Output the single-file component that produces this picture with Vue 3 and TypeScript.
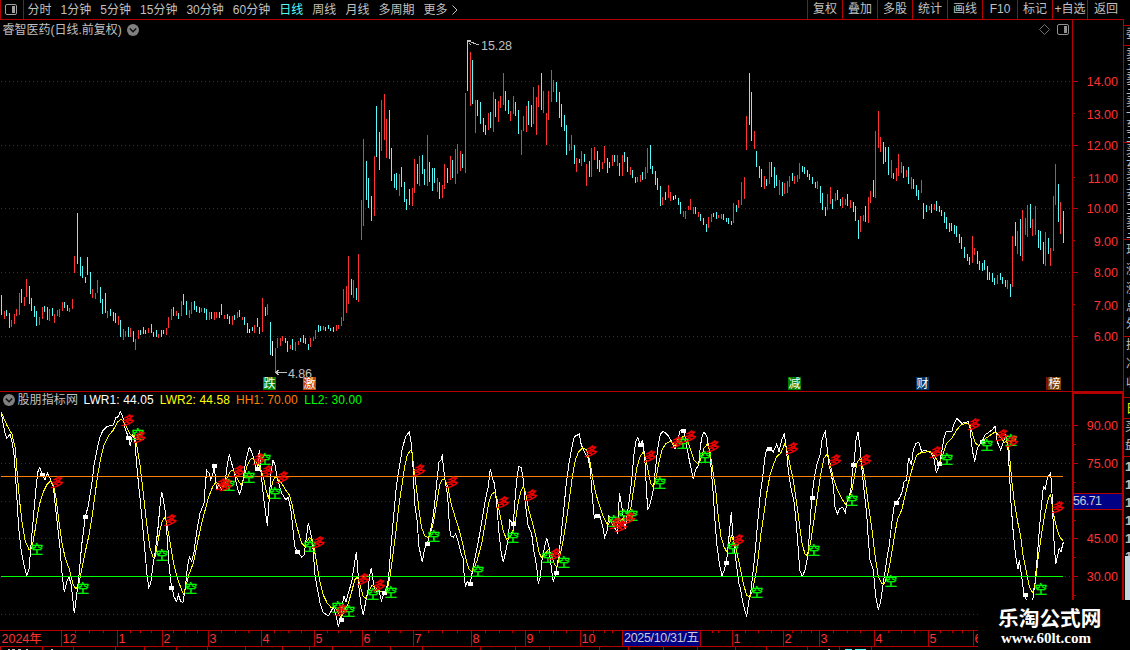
<script setup lang="ts">
import { computed, ref } from 'vue'

type Point = [number, number]

interface Bar {
  x: number
  top: number
  bottom: number
  kind: string
}

const periods = ['分时', '1分钟', '5分钟', '15分钟', '30分钟', '60分钟', '日线', '周线', '月线', '多周期', '更多']
const actions = ['复权', '叠加', '多股', '统计', '画线', 'F10', '标记', '+自选', '返回']
const activePeriod = ref('日线')

// x, high, low, kind: r = up, c = down, w = flat
const barData = `1 295 315 c,4 311 319 r,6 310 316 c,9 313 328 c,11 320 327 r,14 314 324 r,16 309 316 r,19 293 315 r,21 289 303 c,24 297 306 r,26 279 297 r,29 286 304 c,31 298 311 c,34 306 317 c,36 311 326 c,39 317 325 r,42 307 319 r,44 306 312 c,47 307 320 c,49 309 321 r,52 308 316 c,54 314 323 r,57 310 316 r,59 309 317 r,62 302 311 r,64 302 308 c,67 305 311 c,69 308 312 r,72 299 309 r,74 256 273 r,77 213 264 c,80 257 276 c,82 266 278 c,85 277 283 c,87 257 275 c,90 272 294 c,92 289 298 r,95 293 299 r,97 280 293 r,100 287 303 c,102 299 314 c,105 293 313 c,107 311 318 r,110 309 316 c,113 312 321 c,115 313 323 c,118 316 325 r,120 320 337 c,
123 329 340 r,125 331 337 r,128 327 337 c,130 328 337 r,133 331 342 c,135 339 350 r,138 330 339 r,140 330 335 c,143 327 334 c,145 330 334 c,148 328 333 r,151 324 333 c,153 332 337 c,156 330 337 c,158 334 338 r,161 330 337 c,163 330 334 c,166 328 335 r,168 317 328 r,171 309 320 r,173 307 316 c,176 311 316 r,178 313 319 c,181 301 316 r,183 294 305 c,186 301 315 c,189 310 318 r,191 302 314 r,194 301 310 c,196 306 312 c,199 307 313 c,201 308 312 r,204 308 313 c,206 309 320 c,209 312 320 r,211 312 319 c,214 312 320 r,216 312 318 r,219 312 318 c,221 304 315 c,224 315 319 r,227 314 319 c,229 316 324 c,232 316 325 r,234 315 320 c,237 312 318 r,239 310 317 c,242 317 320 r,244 317 325 c,247 323 333 c,249 329 333 w,252 327 331 c,254 325 333 r,257 318 327 c,259 327 334 c,262 298 332 r,265 307 316 c,267 304 315 r,270 322 355 c,272 341 356 w,275 348 372 r,277 338 348 r,280 338 346 r,282 336 341 r,285 338 343 c,287 341 352 c,290 345 349 r,292 339 350 c,295 342 351 r,298 341 345 r,300 338 342 c,303 335 343 c,305 338 344 c,308 344 350 c,310 338 347 r,313 337 341 r,315 330 339 r,318 325 332 c,320 326 331 c,323 326 330 r,325 327 331 c,328 325 329 c,330 328 331 c,333 327 332 c,336 325 331 r,338 325 329 r,341 317 326 r,343 289 321 r,346 286 313 r,348 256 304 r,351 279 295 c,353 280 298 r,356 288 300 c,358 254 302 r,
361 200 240 r,363 139 226 r,366 161 200 c,368 178 208 c,371 196 221 c,374 156 216 r,376 106 157 c,379 132 170 c,381 100 151 r,384 94 140 r,386 119 158 r,389 110 159 c,391 148 181 c,394 174 188 c,396 173 190 c,399 174 196 r,401 167 187 c,404 182 202 c,406 199 210 c,409 189 205 c,412 188 206 r,414 159 193 r,417 164 184 c,419 156 186 r,422 155 174 c,424 169 185 c,427 135 186 r,429 162 182 c,432 168 191 c,434 168 183 c,437 178 192 r,439 182 199 c,442 185 198 r,444 164 189 r,447 168 183 c,450 156 180 r,452 160 178 c,455 149 184 r,457 144 174 r,460 151 171 r,462 154 168 c,465 93 173 r,467 40 91 c,470 52 106 r,472 60 104 c,475 100 133 r,477 100 116 c,480 102 124 c,483 118 132 c,485 125 135 c,488 113 130 r,490 112 128 c,493 92 132 r,495 99 117 c,498 101 122 r,500 96 108 r,503 73 105 r,505 91 111 c,508 100 114 c,510 111 121 r,513 96 114 r,515 102 116 c,518 110 134 c,521 130 155 r,523 116 131 r,526 106 132 r,528 101 125 c,531 105 127 c,533 87 124 r,536 97 135 r,538 85 107 r,541 73 110 c,543 91 113 r,546 113 145 r,548 91 120 r,551 70 102 r,553 80 92 r,556 82 102 c,559 92 118 c,561 104 127 c,564 115 131 c,566 125 155 c,569 144 151 r,571 135 150 r,574 145 164 c,576 158 172 r,579 159 163 c,581 151 166 r,584 154 162 c,586 164 186 r,589 161 177 c,591 148 177 r,594 147 160 r,597 151 169 c,599 160 172 c,602 162 169 r,604 146 163 r,607 158 173 c,609 162 168 c,612 155 166 r,614 155 162 c,617 155 166 r,619 163 176 c,622 155 176 r,624 152 162 c,627 157 172 c,630 167 175 r,632 170 178 c,635 177 183 c,637 177 182 r,640 175 182 r,642 172 180 c,645 167 179 r,647 148 173 r,650 145 169 c,652 166 174 c,655 171 185 c,657 178 190 c,660 186 206 c,662 197 205 r,665 192 200 c,668 185 198 r,670 192 201 r,673 196 200 w,675 195 199 c,678 198 205 c,680 202 214 c,683 211 217 r,685 211 219 r,688 206 210 r,690 199 210 r,693 207 214 r,695 207 214 c,698 212 217 r,
700 214 221 c,703 218 225 c,706 224 232 c,708 217 228 r,711 214 222 r,713 213 217 c,716 212 219 c,718 215 218 r,721 214 219 r,723 214 220 c,726 218 222 c,728 218 224 c,731 221 225 c,733 203 223 r,736 205 212 c,738 200 208 r,741 182 205 r,744 177 199 r,746 116 150 r,749 73 125 c,751 92 141 c,754 131 149 r,756 151 167 c,759 166 178 c,761 169 187 c,764 176 189 r,766 179 186 c,769 162 184 r,771 162 177 c,774 167 188 c,776 175 186 c,779 180 195 r,782 182 196 c,784 183 194 r,787 181 193 r,789 176 187 r,792 173 181 c,794 176 184 r,797 175 182 r,799 163 179 r,802 166 172 c,804 167 174 c,807 170 177 c,809 174 180 c,812 177 184 c,815 182 188 c,817 181 189 r,820 186 203 c,822 193 210 c,825 207 216 c,827 194 210 r,830 187 204 r,832 199 209 c,835 193 201 r,837 190 200 c,840 199 206 c,842 197 208 r,845 199 205 r,847 194 206 c,850 200 208 r,853 202 212 c,855 206 221 c,858 220 239 c,860 216 232 r,863 215 221 r,865 206 222 c,868 197 223 r,870 191 203 r,873 180 197 c,875 131 198 r,878 111 148 r,880 137 152 r,883 142 164 c,885 147 162 c,888 147 175 c,891 160 178 r,893 173 179 c,896 168 181 r,898 154 176 r,901 162 173 r,903 166 178 c,906 170 177 r,908 167 184 c,911 177 189 r,913 179 189 c,916 185 196 c,918 190 200 c,921 180 193 r,923 203 219 c,926 205 212 c,929 206 210 r,931 204 213 c,934 204 210 r,936 201 211 c,939 206 212 c,941 210 216 c,944 212 223 c,946 217 229 c,949 223 232 c,951 223 231 c,954 225 234 c,956 226 237 c,959 234 243 c,961 237 249 c,964 247 258 c,967 254 261 c,969 257 265 c,972 236 263 r,974 248 255 r,977 251 264 c,979 261 270 c,982 263 271 c,984 260 270 c,987 266 280 c,989 272 280 c,992 273 282 c,994 278 285 c,997 275 284 r,1000 273 280 c,1002 277 284 c,1005 280 287 c,1007 280 289 r,1010 284 297 c,1012 236 287 r,1015 222 246 c,1017 231 254 r,1020 219 256 c,1022 210 261 r,1025 218 235 r,1027 205 237 r,1030 204 228 c,1032 219 236 r,1035 206 235 r,1038 230 248 c,1040 231 250 c,1043 242 264 c,1045 232 266 r,1048 238 254 c,1050 248 266 r,1053 196 251 r,1055 164 205 r,1058 184 222 c,1060 202 234 r,1063 211 243 c`

const bars: Bar[] = barData.split(',').map((entry) => {
  const [x, top, bottom, kind] = entry.trim().split(' ')
  return { x: Number(x), top: Number(top), bottom: Number(bottom), kind }
})

function barPath(kind: string) {
  return bars
    .filter(bar => bar.kind === kind)
    .map(bar => `M${bar.x} ${bar.top}h1V${bar.bottom}h-1Z`)
    .join('')
}

// Samples are kept in thirds of a pixel, relative to the chunk origin
function chunk(ox: number, oy: number, data: string): Point[] {
  return data.trim().split(/\s+/).map((pair) => {
    const [x, y] = pair.split(',').map(Number)
    return [ox + x / 3, oy + y / 3]
  })
}

const lwr1: Point[] = [
  ...chunk(0, 385, `4,85 14,140 20,160 30,148 36,170 43,215 49,310 56,430 64,500 72,540 80,572 87,552 93,480 100,400 108,310 113,262 119,248 125,262 135,285 142,264 150,280 160,305 170,400 180,490 187,575 193,622 200,590 207,576 214,600 223,685 230,630 237,570 245,480 256,396 265,362 275,300 282,240 292,190 300,155 310,135 322,124 340,120 347,98 355,95 361,80 368,95 375,130 385,155 391,183 397,150 404,160 409,225 415,290 420,340 427,410 435,500 441,570 446,607 452,595 459,540 467,490 475,420 479,370 485,320 491,350 497,390 503,480 508,550 514,600 522,635 530,650 535,628 542,650 549,652 556,610 562,550 568,516 575,528 582,500 590,440 600,385 612,355 616,300 620,256 627,265 632,285 637,275 643,245 647,290 650,316 656,298 664,312 675,295 682,240 688,208 695,235 702,260 710,300 718,328 725,310 731,270 738,225 748,187 755,200 761,220 768,250 773,245 778,196 783,260 790,330 802,422 808,340 813,260 819,225 825,240 833,285 845,325 858,345 864,336 872,370 878,425 884,485 893,500 905,517 912,510 919,460 925,415 932,445 938,480 945,570 952,610 961,658 970,683 985,692 992,682 1000,665 1008,690 1015,725 1022,700 1031,632 1038,650 1045,625 1055,590 1062,545 1069,500 1073,550 1077,610 1083,660 1090,690 1097,650 1105,610 1109,570`),
  ...chunk(370, 400, `4,503 10,545 16,572 28,575 34,602 42,580 50,565 56,530 62,450 70,360 78,270 84,225 90,190 97,145 107,110 118,95 124,130 129,200 134,310 141,360 147,440 157,487 164,445 172,430 180,400 188,360 194,310 201,240 207,185 213,180 217,163 220,200 226,245 233,290 239,390 243,408 250,412 257,402 265,425 273,460 279,475 283,530 286,558 292,545 300,552 308,510 316,470 325,425 335,365 347,295 355,260 361,206 367,235 373,250 380,310 387,400 394,460 400,487 406,460 415,415 419,360 424,365 430,372 435,300 440,240 446,200 454,202 460,240 466,310 474,375 485,402 491,450 500,500 505,552 511,530 516,480 524,440 530,415 537,440 542,490 550,545 559,515 567,460 574,400 581,330 589,250 597,190 606,140 613,110 628,102 634,135 645,160 655,175 661,210 667,290 673,355 682,348 691,350 698,380 704,412 712,390 716,345 724,370 732,380 742,397 746,340 748,278 754,310 760,350 766,388 772,340 778,300 785,240 791,170 797,125 803,113 810,132 818,122 824,170 829,260 833,330 841,310 850,270 857,200 864,140 871,103 880,94 893,105 905,125 915,148 922,125 930,92 942,92 948,125 955,165 963,205 970,238 977,208 986,195 991,140 996,110 1002,95 1011,110 1018,150 1023,200 1028,260 1034,350 1040,430 1048,490 1056,527 1063,510 1070,480 1076,420 1084,335 1088,400 1093,445 1100,500 1108,560`),
  ...chunk(740, 370, `0,650 10,705 20,740 27,690 33,660 40,600 46,540 52,470 60,380 68,320 75,260 80,238 90,236 100,246 110,222 117,245 125,210 133,190 139,235 145,300 152,350 162,395 169,460 175,540 179,600 187,620 195,600 203,560 209,480 215,385 222,330 230,285 240,255 247,205 256,184 261,230 266,280 273,310 280,345 285,410 292,432 300,415 308,412 316,428 322,390 332,365 338,300 343,270 348,210 354,187 360,230 367,310 374,380 380,430 385,510 390,570 400,600 407,680 415,718 422,695 430,640 440,570 448,525 455,460 462,410 470,395 478,385 487,365 492,335 500,330 503,285 507,263 514,285 520,240 528,220 536,217 545,245 555,240 573,248 583,270 589,310 598,285 606,240 612,205 618,186 635,185 643,160 651,145 665,160 685,155 690,175 697,240 704,275 712,235 725,215 735,195 758,178 765,168 772,215 782,240 790,215 797,195 803,225 808,300 813,400 820,490 827,560 834,598 838,570 845,620 852,675 860,690 868,705 878,690 885,640 891,570 898,480 904,410 910,350 916,358 922,325 932,308 936,370 941,500 947,582 953,555 958,535 963,545 970,517`),
]

const lwr2: Point[] = [
  ...chunk(0, 385, `4,82 20,120 36,148 46,190 52,270 59,350 66,410 76,470 88,495 95,490 103,450 110,405 118,360 128,325 140,300 152,288 160,300 168,340 177,410 186,475 196,520 207,550 220,600 228,611 236,600 245,555 256,500 267,450 277,390 285,330 293,270 302,220 312,180 325,153 340,135 352,112 363,102 372,110 382,130 392,150 404,152 412,190 420,240 428,310 436,380 443,440 450,490 459,517 465,515 472,480 480,435 487,408 494,398 500,415 510,470 520,530 532,580 545,615 551,628 557,605 566,570 580,535 592,475 604,420 618,365 626,335 638,305 648,292 660,300 670,305 680,280 690,260 698,256 706,265 715,288 724,300 732,280 742,240 752,222 761,221 770,235 780,245 790,275 798,315 805,338 812,315 820,285 827,274 835,285 845,295 855,312 868,330 877,360 886,405 895,440 905,475 913,483 920,470 928,458 936,463 944,500 951,540 960,590 970,630 982,655 993,667 1005,665 1015,685 1024,698 1034,675 1045,655 1055,620 1064,585 1072,577 1080,600 1090,635 1098,640 1106,620`),
  ...chunk(370, 400, `5,557 14,560 22,568 34,575 44,578 52,568 60,530 68,470 77,400 86,320 95,260 104,200 112,165 121,152 126,155 131,200 140,270 147,330 155,385 165,408 174,413 181,400 190,370 200,310 209,255 217,237 226,240 234,262 243,310 255,350 266,385 278,430 287,475 296,505 304,515 312,505 322,480 335,430 346,370 356,310 365,283 374,276 382,300 390,345 400,395 410,418 420,410 430,390 438,350 446,300 454,270 461,260 468,285 476,330 488,370 498,410 508,460 516,475 526,460 537,447 545,470 553,492 561,502 569,470 578,430 588,370 598,300 607,230 616,180 626,155 638,144 650,150 660,185 668,235 677,280 688,315 700,350 713,375 722,360 735,368 748,370 765,345 774,348 783,320 792,260 800,205 810,170 820,156 827,175 835,215 842,250 850,262 858,235 866,190 876,150 888,130 903,123 915,138 928,118 942,108 952,120 962,150 972,180 985,193 993,175 1002,145 1012,132 1020,155 1028,210 1037,270 1045,350 1053,410 1062,440 1070,455 1078,435 1084,408 1092,425 1100,455`),
  ...chunk(740, 370, `0,590 10,640 20,677 30,680 38,660 48,610 55,560 63,490 72,430 80,370 90,315 100,285 110,260 122,250 135,220 142,245 150,285 160,330 170,400 178,460 186,520 195,552 203,557 212,515 222,450 232,380 242,315 252,265 263,250 270,280 280,325 292,360 305,385 316,402 325,390 336,360 345,310 352,275 360,266 368,290 376,335 386,410 396,480 405,555 415,620 425,640 433,640 442,620 450,580 460,520 472,450 485,420 497,370 510,320 520,285 530,255 545,247 573,245 585,260 598,282 606,260 620,220 635,205 650,180 662,165 680,160 690,165 698,195 706,220 716,226 730,210 745,200 758,190 768,186 780,200 792,217 800,215 807,240 815,330 822,390 832,450 842,500 850,560 860,610 868,650 878,668 886,640 895,560 905,490 915,430 925,385 932,373 940,430 950,475 960,502 970,512`),
]

const toPoints = (points: Point[]) => points.map(([x, y]) => `${x.toFixed(1)},${y.toFixed(1)}`).join(' ')
const lwr1Points = computed(() => toPoints(lwr1))
const lwr2Points = computed(() => toPoints(lwr2))

const longSignals: Point[] = [[57, 482], [128, 420], [139.5, 437], [170.5, 520], [222, 484], [226, 485], [238.5, 471], [259, 459], [267, 471], [282.5, 477], [318.5, 542], [341, 610], [363, 579], [379, 585], [419, 470], [452, 482], [503, 502], [531, 495], [555, 554], [591, 451], [616, 523], [621, 526], [629, 518], [650, 456], [677, 442], [690, 436], [713, 446], [738, 540], [792, 448], [835, 460], [865, 460], [936, 452], [974, 424], [1002, 435], [1012, 441], [1058, 507]]
const shortSignals: Point[] = [[37, 549], [83, 588], [138, 434], [162, 555], [191, 588], [229, 485], [249, 477], [265, 459], [275, 493], [310, 546], [338, 607], [349, 611], [373, 594], [391, 592], [434, 536], [478, 571], [513, 537], [548, 557], [564, 562], [614, 521], [624, 515], [632, 515], [660, 483], [683, 443], [705, 457], [733, 548], [757, 592], [814, 550], [852, 500], [891, 581], [947, 459], [987, 445], [1011, 440], [1041, 589]]
const squares: Point[] = [[42, 475], [85, 517], [128, 438], [171, 588], [214, 466], [257, 469], [297, 552], [341, 620], [384, 593], [427, 544], [470, 584], [513, 524], [556, 573], [597, 516], [640, 445], [683, 431], [726, 563], [769, 449], [812, 498], [853, 465], [896, 503], [939, 464], [982, 442], [1025, 595]]

const priceTicks = [81, 113, 145, 177, 208, 240, 272, 304, 336].map((y, i) => ({
  y,
  label: (14 - i).toFixed(2),
  major: i % 2 === 0,
}))

const rangeTicks = [
  { y: 425, label: '90.00' },
  { y: 463, label: '75.00' },
  { y: 538, label: '45.00' },
  { y: 576, label: '30.00' },
]
const rangeGrid = [425, 463, 501, 538, 576, 614]
const rangeMinor = [444, 482, 520, 557, 595]

const badges = [
  { x: 263, text: '跌', fill: '#008000' },
  { x: 303, text: '激', fill: '#c04810' },
  { x: 788, text: '减', fill: '#008000' },
  { x: 916, text: '财', fill: '#003868' },
  { x: 1048, text: '榜', fill: '#804000' },
]

const months = [
  { x: 0, label: '2024年' },
  { x: 61, label: '12' },
  { x: 117, label: '1' },
  { x: 162, label: '2' },
  { x: 208, label: '3' },
  { x: 261, label: '4' },
  { x: 314, label: '5' },
  { x: 362, label: '6' },
  { x: 413, label: '7' },
  { x: 471, label: '8' },
  { x: 525, label: '9' },
  { x: 580, label: '10' },
  { x: 732, label: '1' },
  { x: 783, label: '2' },
  { x: 819, label: '3' },
  { x: 874, label: '4' },
  { x: 928, label: '5' },
  { x: 973, label: '6' },
]
const weekTicks = [75, 89, 103, 130, 140, 151, 173, 185, 197, 221, 235, 248, 274, 288, 301, 327, 338, 350, 375, 388, 400, 428, 442, 457, 485, 499, 512, 539, 553, 566, 593, 604, 612, 712, 718, 745, 758, 771, 792, 801, 811, 833, 847, 860, 888, 901, 914, 940, 952, 962]
const footerTicks = [42, 73, 115, 144, 176, 207, 245, 282, 309, 332, 390, 422, 480, 515, 549, 599, 628, 663, 697, 735, 766, 807, 839, 871]

const quoteChars = [
  { text: '委', y: 38 },
  ...['卖', '五', '卖', '三', '卖', '一', '至', '三', '买', '云', '买', '五', '至', '三', '卖', '三'].map((text, i) => ({ text, y: 58 + i * 12 })),
  { text: '现', y: 254 },
  { text: '涨', y: 274 },
  { text: '涨', y: 293 },
  { text: '总', y: 311 },
  { text: '外', y: 328 },
  { text: '换', y: 349 },
  { text: '净', y: 368 },
  { text: '收', y: 387 },
]
const quoteRules = [25, 45, 142, 239, 336, 397, 418, 456]
</script>

<template>
  <div class="terminal">
    <div class="main">
      <header class="toolbar">
        <div class="layout-toggle">
          <svg width="12" height="11" viewBox="0 0 12 11">
            <rect x="0.5" y="0.5" width="11" height="10" rx="1.5" fill="none" stroke="#a0a0a0" />
            <rect x="7" y="2" width="3" height="7" fill="#a0a0a0" />
          </svg>
        </div>
        <nav class="periods">
          <span
            v-for="period in periods"
            :key="period"
            :class="{ active: period === activePeriod }"
            @click="activePeriod = period"
          >{{ period }}</span>
          <svg class="more" width="6" height="10" viewBox="0 0 6 10">
            <path d="M0.5 0.5L5 5L0.5 9.5" fill="none" stroke="#c0c0c0" />
          </svg>
        </nav>
        <div class="actions">
          <span v-for="action in actions" :key="action">{{ action }}</span>
        </div>
      </header>

      <section class="panel price">
        <div class="plot">
          <div class="title">
            <span>睿智医药(日线.前复权)</span>
            <svg width="12" height="12" viewBox="0 0 12 12">
              <circle cx="6" cy="6" r="6" fill="#808080" />
              <path d="M2.8 4.5L6 7.7L9.2 4.5" fill="none" stroke="#111" stroke-width="1.6" />
            </svg>
            <div class="tools">
              <svg width="11" height="11" viewBox="0 0 11 11">
                <path d="M5.5 0.5L10.5 5.5L5.5 10.5L0.5 5.5Z" fill="none" stroke="#707070" />
              </svg>
              <svg width="12" height="11" viewBox="0 0 12 11">
                <rect x="0.5" y="0.5" width="11" height="10" rx="1.5" fill="none" stroke="#909090" />
                <rect x="7" y="2" width="3" height="7" fill="#909090" />
              </svg>
            </div>
          </div>
          <svg class="canvas" width="1072" height="352" viewBox="0 39 1072 352">
            <g class="grid">
              <line v-for="tick in priceTicks.filter(t => t.major)" :key="tick.y" x1="1" :y1="tick.y + 0.5" x2="1070" :y2="tick.y + 0.5" />
            </g>
            <g class="bars">
              <path :d="barPath('r')" fill="#ff3232" />
              <path :d="barPath('c')" fill="#54fcfc" />
              <path :d="barPath('w')" fill="#ffffff" />
            </g>
            <path class="pointer" d="M468 40.5H471M468 41L479 45M469 43L471 45" />
            <text class="note" x="481" y="50" textLength="31">15.28</text>
            <path class="pointer" d="M275 372.5H287M279 370L275.5 372.5L279 375" />
            <text class="note" x="288" y="378" textLength="24">4.86</text>
            <rect x="1046" y="377" width="4" height="13" fill="#801010" />
            <g v-for="badge in badges" :key="badge.x">
              <rect :x="badge.x" y="377" width="13" height="13" :fill="badge.fill" />
              <text class="badge" :x="badge.x + 6.5" y="388">{{ badge.text }}</text>
            </g>
          </svg>
        </div>
        <svg class="axis" width="52" height="371" viewBox="1072 20 52 371">
          <path class="rule" d="M1072.5 20V391M1123.5 20V391" />
          <g v-for="tick in priceTicks" :key="tick.y">
            <line class="rule" x1="1073" :x2="tick.major ? 1078 : 1075" :y1="tick.y + 0.5" :y2="tick.y + 0.5" />
            <text x="1118" :y="tick.y + (tick.major ? 5 : 6)">{{ tick.label }}</text>
          </g>
        </svg>
      </section>

      <section class="panel range">
        <div class="plot">
          <div class="title legend">
            <svg width="12" height="12" viewBox="0 0 12 12">
              <circle cx="6" cy="6" r="6" fill="#808080" />
              <path d="M2.8 4.5L6 7.7L9.2 4.5" fill="none" stroke="#111" stroke-width="1.6" />
            </svg>
            <span class="name">股朋指标网</span>
            <span class="lwr1">LWR1: 44.05</span>
            <span class="lwr2">LWR2: 44.58</span>
            <span class="hh1">HH1: 70.00</span>
            <span class="ll2">LL2: 30.00</span>
          </div>
          <svg class="canvas" width="1072" height="221" viewBox="0 409 1072 221">
            <g class="grid">
              <line v-for="y in rangeGrid" :key="y" x1="1" :y1="y + 0.5" x2="1070" :y2="y + 0.5" />
            </g>
            <polyline class="trace" :points="lwr1Points" stroke="#ffffff" />
            <polyline class="trace" :points="lwr2Points" stroke="#ffff00" />
            <rect v-for="([x, y], i) in squares" :key="i" :x="x - 2" :y="y - 2" width="5" height="4" fill="#ffffff" />
            <line class="level" x1="1" x2="1063" y1="476.5" y2="476.5" stroke="#ff8000" />
            <line class="level" x1="1" x2="1063" y1="576.5" y2="576.5" stroke="#00ff00" />
            <text v-for="([x, y], i) in shortSignals" :key="i" class="signal short" :x="x" :y="y + 4.5">空</text>
            <text
              v-for="([x, y], i) in longSignals"
              :key="i"
              class="signal long"
              :transform="`translate(${x} ${y}) skewX(-14)`"
              y="4.5"
            >多</text>
          </svg>
        </div>
        <svg class="axis" width="52" height="238" viewBox="1072 392 52 238">
          <path class="rule thick" d="M1073 630V393H1123V630" />
          <line v-for="y in rangeMinor" :key="y" class="rule" x1="1074" x2="1075.5" :y1="y + 0.5" :y2="y + 0.5" />
          <g v-for="tick in rangeTicks" :key="tick.y">
            <line class="rule" x1="1074" x2="1078" :y1="tick.y + 0.5" :y2="tick.y + 0.5" />
            <text x="1118" :y="tick.y + 5">{{ tick.label }}</text>
          </g>
          <rect x="1074" y="493" width="48" height="16" fill="#000084" />
          <path class="rule" d="M1074 493.5H1122M1074 509.5H1122" />
          <text class="cursor" x="1073" y="505" textLength="29">56.71</text>
        </svg>
      </section>

      <svg class="timeline" width="1124" height="20" viewBox="0 630 1124 20">
        <path class="rule" d="M0 630.5H1124M0 646.5H1124M0.5 646V650" />
        <line v-for="x in weekTicks" :key="x" class="rule" :x1="x + 0.5" :x2="x + 0.5" y1="630" y2="633" />
        <line v-for="x in footerTicks" :key="x" class="rule" :x1="x + 0.5" :x2="x + 0.5" y1="646" y2="650" />
        <g v-for="month in months" :key="month.x">
          <line v-if="month.x" class="rule" :x1="month.x + 0.5" :x2="month.x + 0.5" y1="630" y2="646" />
          <text :x="month.x + 1.5" y="643">{{ month.label }}</text>
        </g>
        <rect x="623" y="631" width="77" height="15" fill="#000084" />
        <path class="rule" d="M622.5 630V646M700.5 630V646" />
        <text class="cursor" x="624" y="642" textLength="75">2025/10/31/五</text>
        <path d="M8 649.5h2m2 0h3m3 0h3m5 0h2m23 0h2M828 649.5h2m26 0h9" stroke="#c0c0c0" />
        <path d="M845 649.5h7m3 0h11" stroke="#54fcfc" />
      </svg>
    </div>

    <svg class="quotes" width="6" height="650" viewBox="1124 0 6 650">
      <text v-for="item in quoteChars" :key="item.y" x="1126" :y="item.y">{{ item.text }}</text>
      <text class="day" x="1126" y="413">日</text>
      <text x="1125" y="431">买</text>
      <text x="1125" y="449">盘</text>
      <text v-for="i in 6" :key="i" class="bold" x="1125" :y="453 + i * 18">1</text>
      <line v-for="y in quoteRules" :key="y" class="rule" x1="1124" x2="1130" :y1="y + 0.5" :y2="y + 0.5" />
      <rect x="1125" y="556" width="5" height="44" fill="#c4d8e0" />
    </svg>

    <div class="site">
      <strong>乐淘公式网</strong>
      <span>www.60lt.com</span>
    </div>
  </div>
</template>

<style>
body {
  background: #000;
  overflow: hidden;
}
</style>

<style scoped>
.terminal {
  position: relative;
  display: flex;
  width: 1130px;
  height: 650px;
  overflow: hidden;
  background: #000;
  color: #c0c0c0;
  font: 12px/18px "Liberation Sans", "Noto Sans CJK SC", sans-serif;
}

svg {
  display: block;
  flex: none;
}

.main {
  display: flex;
  flex-direction: column;
  width: 1124px;
}

.toolbar {
  display: flex;
  box-sizing: border-box;
  height: 20px;
  border-bottom: 1px solid #b40000;
  white-space: nowrap;
}

.layout-toggle {
  display: flex;
  align-items: center;
  box-sizing: border-box;
  width: 24px;
  padding-left: 4px;
  border: solid #b40000;
  border-width: 0 1px;
}

.periods {
  display: flex;
  align-items: center;
  gap: 9.05px;
  padding-left: 3.5px;
}

.periods .active {
  color: #54fcfc;
}

.periods .more {
  margin-left: -5px;
}

.actions {
  display: flex;
  margin-left: auto;
}

.actions span {
  box-sizing: border-box;
  width: 35px;
  border-left: 1px solid #b40000;
  text-align: center;
}

.actions span:last-child {
  width: 37px;
}

.panel {
  display: flex;
}

.price {
  height: 371px;
}

.range {
  height: 238px;
  border-top: 1px solid #b40000;
}

.plot {
  width: 1072px;
}

.title {
  display: flex;
  align-items: center;
  gap: 5px;
  height: 19px;
  padding-left: 2.5px;
}

.tools {
  display: flex;
  gap: 7px;
  margin-left: auto;
  padding-right: 3px;
}

.legend {
  box-sizing: border-box;
  height: 17px;
  padding-bottom: 2px;
  gap: 6px;
  letter-spacing: 0.1px;
}

.legend .name {
  margin-left: -3px;
  margin-right: -0.5px;
}

.lwr1 {
  color: #fff;
}

.lwr2 {
  color: #ff0;
}

.hh1 {
  color: #ff8000;
}

.ll2 {
  color: #0f0;
  margin-left: 0.5px;
}

.grid line {
  stroke: #a00000;
  stroke-dasharray: 1 3;
  shape-rendering: crispEdges;
}

.bars path {
  shape-rendering: crispEdges;
}

.pointer,
.level,
.trace {
  fill: none;
  stroke-width: 1;
  shape-rendering: crispEdges;
}

.pointer {
  stroke: #c0c0c0;
}

.rule {
  fill: none;
  stroke: #b40000;
  shape-rendering: crispEdges;
}

.thick {
  stroke-width: 2;
}

.note {
  fill: #c0c0c0;
  font-size: 12.5px;
}

.badge {
  fill: #fff;
  font-size: 12px;
  text-anchor: middle;
}

.axis text {
  fill: #ff3232;
  font-size: 12.5px;
  text-anchor: end;
}

.timeline text {
  fill: #ff3232;
  font-size: 12.5px;
}

.axis .cursor,
.timeline .cursor {
  fill: #c8c8d8;
  text-anchor: start;
}

.signal {
  font-size: 12.5px;
  text-anchor: middle;
  stroke-width: 0.4;
}

.short {
  fill: #0f0;
  stroke: #0f0;
}

.long {
  fill: #f00;
  stroke: #f00;
}

.quotes {
  overflow: hidden;
}

.quotes text {
  fill: #c0c0c0;
}

.quotes .day {
  fill: #ff0;
}

.quotes .bold {
  font-weight: 700;
  font-size: 13px;
}

.site {
  position: absolute;
  left: 978px;
  top: 600px;
  display: flex;
  flex-direction: column;
  box-sizing: border-box;
  width: 152px;
  height: 50px;
  padding: 7px 0 0 20px;
  background: #000;
  color: #fff;
}

.site strong {
  font-size: 20.7px;
  line-height: 23px;
}

.site span {
  padding-left: 3px;
  font: bold 15px/17px "Liberation Serif", serif;
}
</style>
